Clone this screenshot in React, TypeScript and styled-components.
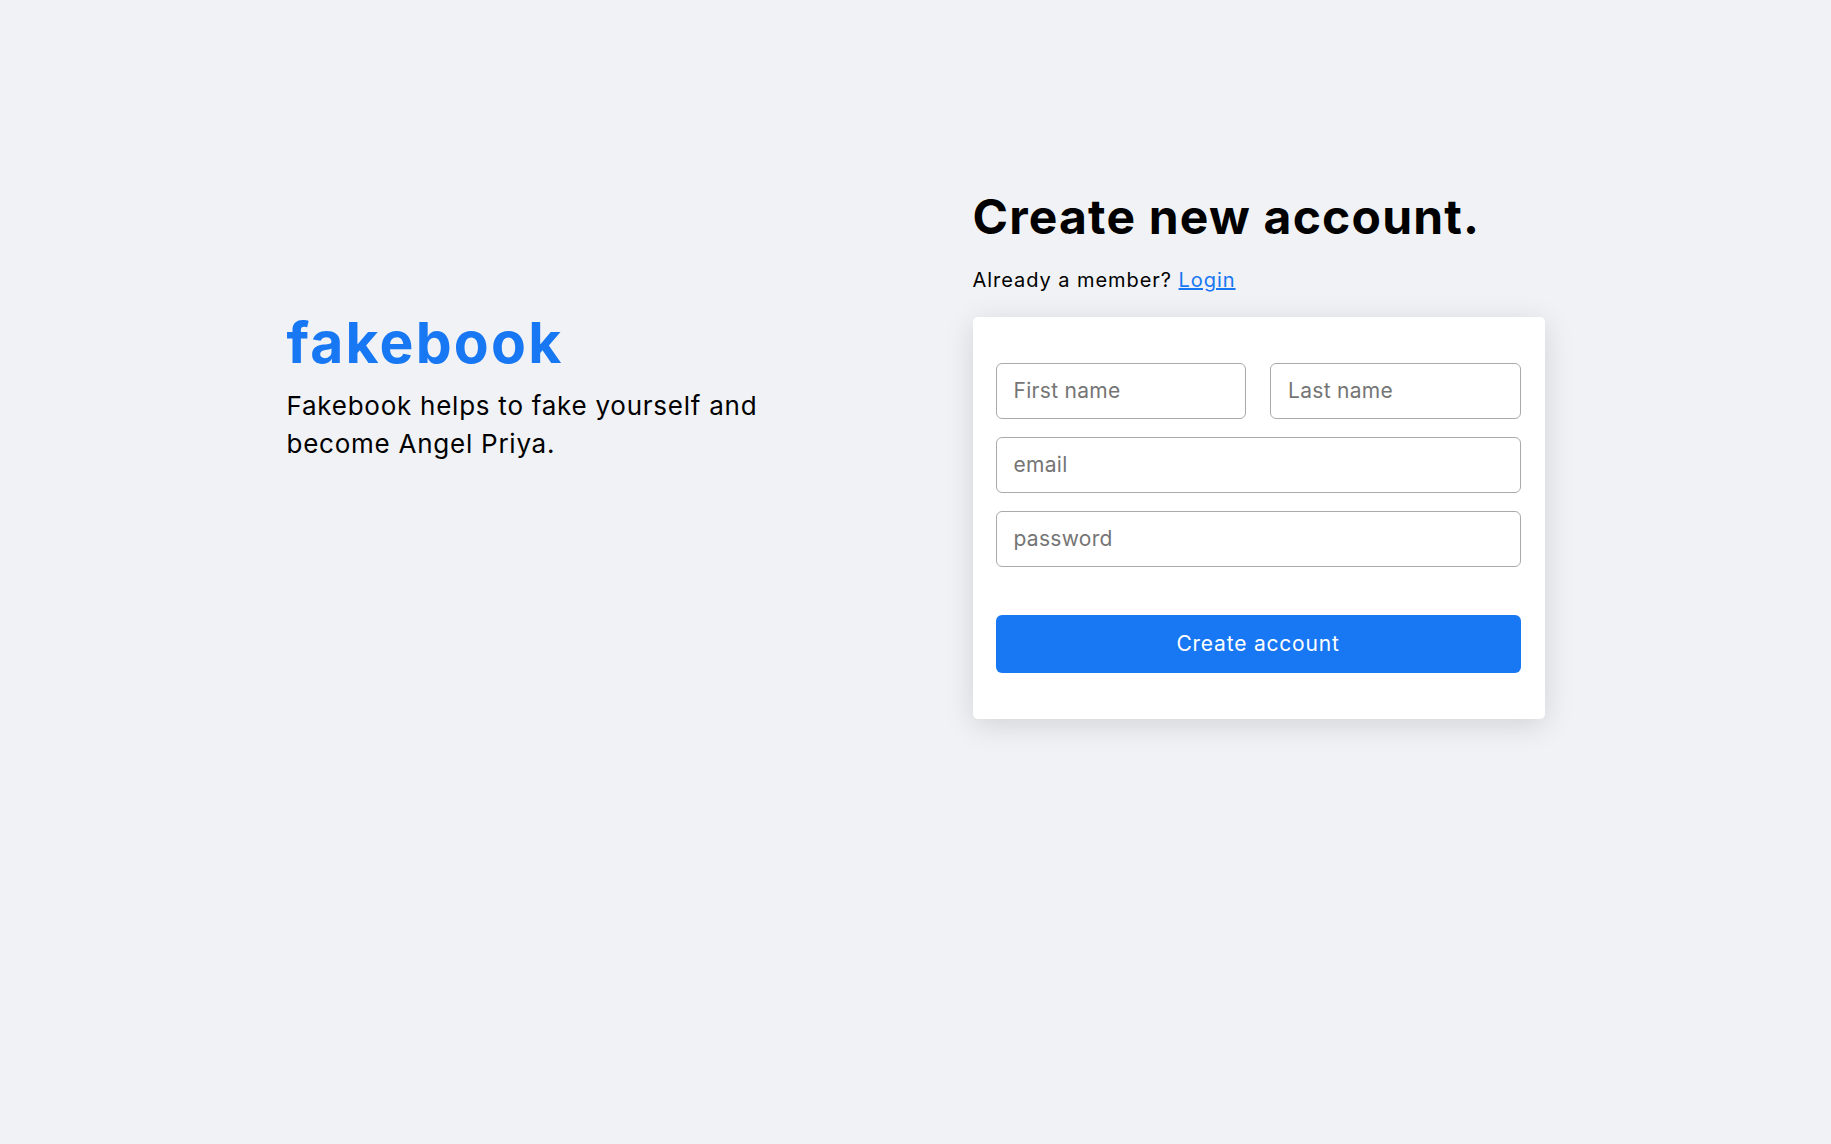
import React from 'react';
import styled, { createGlobalStyle } from 'styled-components';

const GlobalStyle = createGlobalStyle`
  * {
    box-sizing: border-box;
  }
  body {
    margin: 0;
    background: #f0f2f5;
    font-family: Inter, "Open Sans", sans-serif;
    color: #000;
  }
`;

const App = () => {
  return (
    <>
      <GlobalStyle />
      <Page>
        <Intro>
          <Logo>fakebook</Logo>
          <Tagline>Fakebook helps to fake yourself and become Angel Priya.</Tagline>
        </Intro>
        <SignupSection>
          <Title>Create new account.</Title>
          <MemberNote>
            Already a member? <a href="#">Login</a>
          </MemberNote>
          <Card>
            <Form onSubmit={e => e.preventDefault()}>
              <NameRow>
                <Input type="text" placeholder="First name" />
                <Input type="text" placeholder="Last name" />
              </NameRow>
              <Input type="email" placeholder="email" />
              <Input type="password" placeholder="password" />
              <SubmitButton type="submit">Create account</SubmitButton>
            </Form>
          </Card>
        </SignupSection>
      </Page>
    </>
  );
};

export default App;

const Page = styled.main`
  width: 1258px;
  margin: 0 auto;
  padding-top: 188px;
  min-height: 100vh;
  display: flex;
  justify-content: space-between;
  align-items: flex-start;
`;

const Intro = styled.section`
  max-width: 520px;
  padding-top: 121px;
`;

const Logo = styled.h1`
  margin: 0;
  color: #1877f2;
  font-size: 57px;
  font-weight: 700;
  line-height: 1.2;
  letter-spacing: 2.2px;
`;

const Tagline = styled.p`
  margin: 10px 0 0;
  font-size: 26px;
  line-height: 38px;
  letter-spacing: 0.75px;
`;

const SignupSection = styled.section`
  width: 572px;
`;

const Title = styled.h2`
  margin: 0;
  font-size: 48px;
  font-weight: 700;
  line-height: 1.2;
  letter-spacing: 1.2px;
`;

const MemberNote = styled.p`
  margin: 20px 0 23px;
  font-size: 20px;
  line-height: 28px;
  letter-spacing: 0.95px;

  a {
    color: #1877f2;
    text-decoration: underline;
  }
`;

const Card = styled.div`
  background: #fff;
  border-radius: 5px;
  padding: 46px 24px 46px 23px;
  box-shadow: 0 6px 30px rgba(0, 0, 0, 0.13);
`;

const Form = styled.form`
  display: flex;
  flex-direction: column;
  gap: 18px;
`;

const NameRow = styled.div`
  display: grid;
  grid-template-columns: 1fr 1fr;
  gap: 24px;
`;

const Input = styled.input`
  width: 100%;
  height: 56px;
  padding: 0 17px;
  border: 1px solid #aaaaaa;
  border-radius: 6px;
  font-family: inherit;
  font-size: 21px;
  letter-spacing: 0.3px;
  color: #222;
  background: #fff;
  outline: none;

  &::placeholder {
    color: #757575;
  }
`;

const SubmitButton = styled.button`
  margin-top: 30px;
  height: 58px;
  border: none;
  border-radius: 6px;
  background: #1877f2;
  color: #fff;
  font-family: inherit;
  font-size: 21px;
  letter-spacing: 0.8px;
  cursor: pointer;
`;
